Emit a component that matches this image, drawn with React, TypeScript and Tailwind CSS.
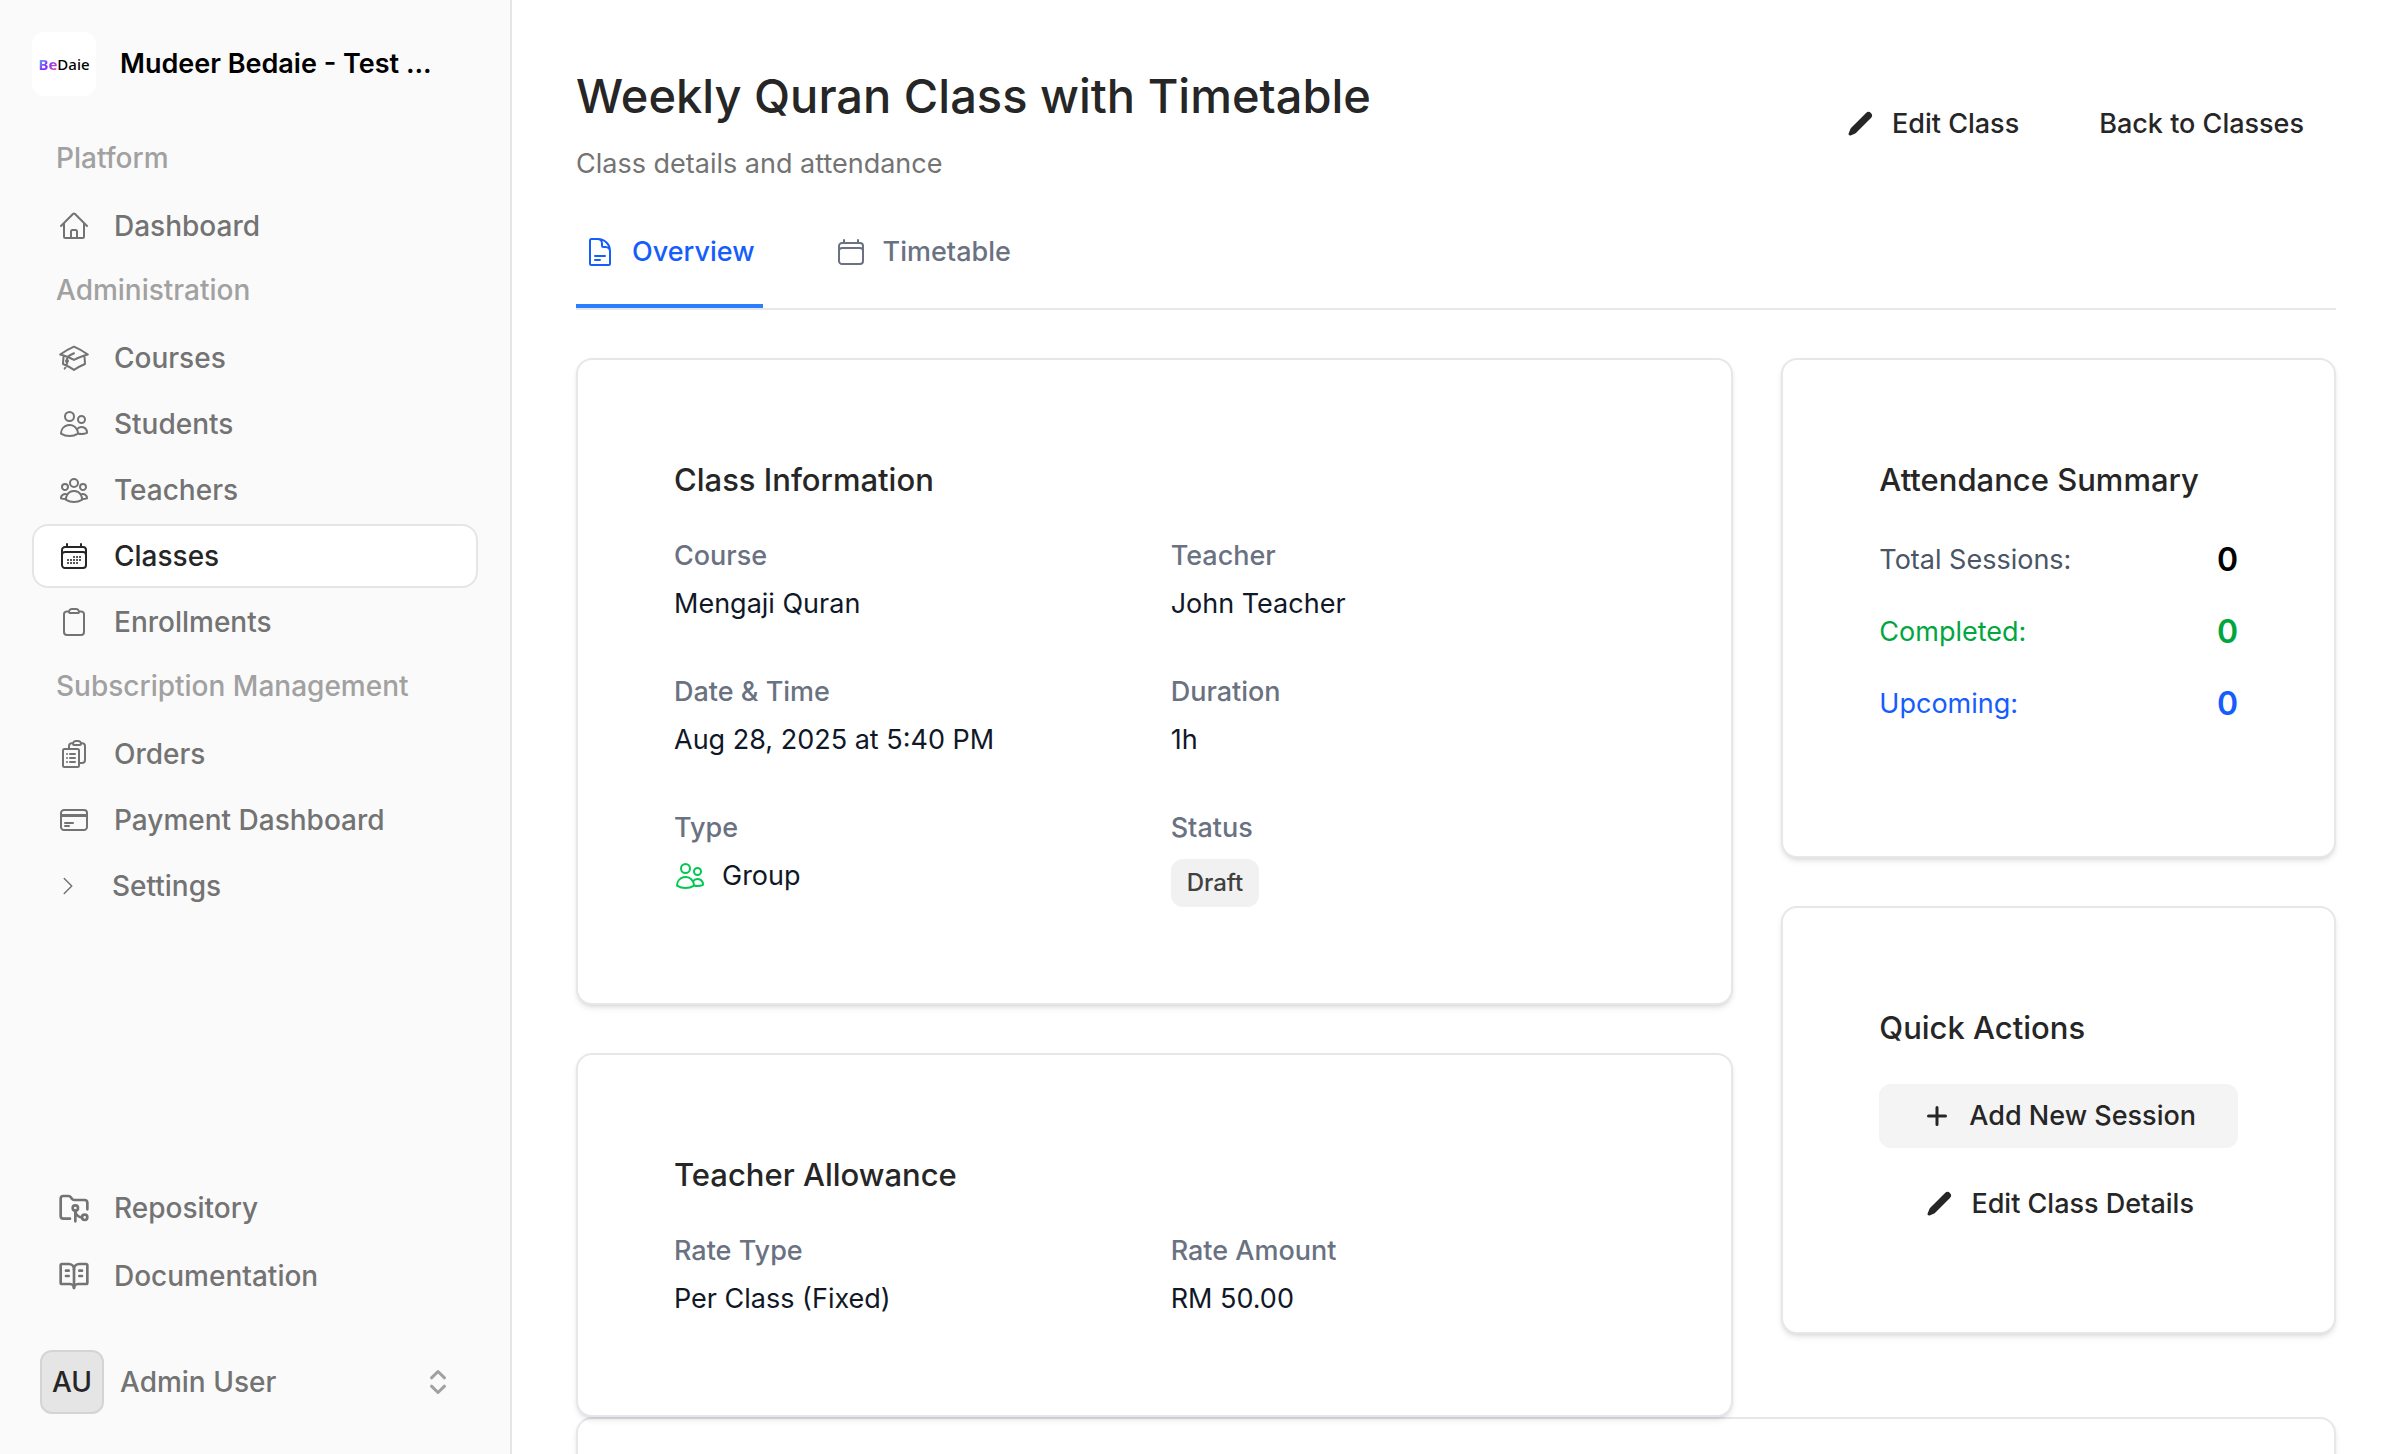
import type { ReactNode } from "react";
import type { IconType } from "react-icons";
import {
  HiOutlineAcademicCap,
  HiOutlineCalendar,
  HiOutlineCalendarDays,
  HiOutlineChevronRight,
  HiOutlineClipboard,
  HiOutlineClipboardDocumentList,
  HiOutlineCreditCard,
  HiOutlineDocumentText,
  HiOutlineHome,
  HiOutlineUserGroup,
  HiOutlineUsers,
} from "react-icons/hi2";
import { BookOpenText, FolderGit2 } from "lucide-react";

function MicroIcon({ d }: { d: string }) {
  return (
    <svg viewBox="0 0 16 16" fill="currentColor" aria-hidden="true" className="size-8 shrink-0">
      <path fillRule="evenodd" clipRule="evenodd" d={d} />
    </svg>
  );
}

const pencil =
  "M11.013 2.513a1.75 1.75 0 0 1 2.475 2.474L6.226 12.25a2.751 2.751 0 0 1-.892.596l-2.047.848a.75.75 0 0 1-.98-.98l.848-2.047a2.75 2.75 0 0 1 .596-.892l7.262-7.261Z";
const plus =
  "M8.75 3.75a.75.75 0 0 0-1.5 0v3.5h-3.5a.75.75 0 0 0 0 1.5h3.5v3.5a.75.75 0 0 0 1.5 0v-3.5h3.5a.75.75 0 0 0 0-1.5h-3.5v-3.5Z";

function ChevronUpDown() {
  return (
    <svg
      viewBox="0 0 16 16"
      fill="none"
      stroke="currentColor"
      strokeWidth="1.5"
      strokeLinecap="round"
      strokeLinejoin="round"
      aria-hidden="true"
      className="mr-4 ml-auto size-8 shrink-0 text-neutral-400"
    >
      <path d="M4.75 5.9 8 2.75l3.25 3.15M4.75 10.1 8 13.25l3.25-3.15" />
    </svg>
  );
}

type Item = { label: string; icon: IconType | typeof FolderGit2; active?: boolean };

function NavItem({ label, icon: Icon, active }: Item) {
  return (
    <a
      href="#"
      aria-current={active ? "page" : undefined}
      className={`flex h-16 items-center gap-6 rounded-2xl border-2 px-6 ${
        active ? "border-neutral-200 bg-white text-neutral-800" : "border-transparent text-neutral-500"
      }`}
    >
      <Icon className="size-8 shrink-0" />
      {label}
    </a>
  );
}

function NavGroup({ title, items, children }: { title: string; items: Item[]; children?: ReactNode }) {
  return (
    <section>
      <h2 className="mb-1 flex h-16 items-center px-6 text-neutral-400">{title}</h2>
      <div className="flex flex-col gap-0.5">
        {items.map((i) => (
          <NavItem key={i.label} {...i} />
        ))}
        {children}
      </div>
    </section>
  );
}

function Sidebar() {
  return (
    <aside className="flex w-[512px] shrink-0 flex-col border-r-2 border-neutral-200 bg-neutral-50 p-8 text-[28px] font-medium">
      <a href="#" className="flex items-center gap-6 text-black">
        <span className="flex size-16 shrink-0 items-center justify-center rounded-xl bg-white font-['Noto_Sans',sans-serif] text-[15px] leading-5 font-medium">
          <span className="bg-linear-to-br from-cyan-400 via-violet-600 to-pink-500 bg-clip-text font-bold text-transparent">
            Be
          </span>
          Daie
        </span>
        <span className="text-[27px] font-semibold whitespace-nowrap">Mudeer Bedaie - Test ...</span>
      </a>
      <nav className="mt-[30px]">
        <NavGroup title="Platform" items={[{ label: "Dashboard", icon: HiOutlineHome }]} />
        <NavGroup
          title="Administration"
          items={[
            { label: "Courses", icon: HiOutlineAcademicCap },
            { label: "Students", icon: HiOutlineUsers },
            { label: "Teachers", icon: HiOutlineUserGroup },
            { label: "Classes", icon: HiOutlineCalendarDays, active: true },
            { label: "Enrollments", icon: HiOutlineClipboard },
          ]}
        />
        <NavGroup
          title="Subscription Management"
          items={[
            { label: "Orders", icon: HiOutlineClipboardDocumentList },
            { label: "Payment Dashboard", icon: HiOutlineCreditCard },
          ]}
        >
          <button type="button" className="flex h-16 items-center gap-8 px-6 text-neutral-500">
            <HiOutlineChevronRight className="size-6 shrink-0" />
            Settings
          </button>
        </NavGroup>
      </nav>
      <nav className="mt-auto flex flex-col gap-1">
        <NavItem label="Repository" icon={FolderGit2} />
        <NavItem label="Documentation" icon={BookOpenText} />
      </nav>
      <button type="button" className="mt-[34px] flex items-center p-2 text-neutral-500">
        <span className="flex size-16 shrink-0 items-center justify-center rounded-xl border-2 border-neutral-300 bg-neutral-200 text-neutral-800">
          AU
        </span>
        <span className="ml-4">Admin User</span>
        <ChevronUpDown />
      </button>
    </aside>
  );
}

function Card({ title, children }: { title: string; children: ReactNode }) {
  return (
    <section className="rounded-2xl border-2 border-gray-200 bg-white p-24 shadow-md">
      <h2 className="mb-8 text-[31px] leading-12 font-medium whitespace-nowrap text-neutral-800">{title}</h2>
      {children}
    </section>
  );
}

function Field({ label, children }: { label: string; children: ReactNode }) {
  return (
    <div>
      <dt className="font-medium text-gray-500">{label}</dt>
      <dd className="mt-2 text-gray-900">{children}</dd>
    </div>
  );
}

function Stat({ label, value, tone, valueTone }: { label: string; value: number; tone: string; valueTone: string }) {
  return (
    <div className="flex h-12 items-center justify-between">
      <dt className={tone}>{label}</dt>
      <dd className={`text-[32px] font-semibold ${valueTone}`}>{value}</dd>
    </div>
  );
}

export default function App() {
  return (
    <div className="flex h-screen bg-white font-['Inter',sans-serif] text-[27px] leading-10">
      <Sidebar />
      <main className="min-w-0 flex-1 overflow-y-auto p-16 [scrollbar-width:none]">
        <header className="flex items-center justify-between">
          <div>
            <h1 className="text-[47px] leading-16 font-medium text-neutral-800">Weekly Quran Class with Timetable</h1>
            <p className="mt-4 text-neutral-500">Class details and attendance</p>
          </div>
          <div className="flex gap-4 font-medium text-neutral-800">
            <a href="#" className="flex h-20 items-center gap-4 px-8">
              <MicroIcon d={pencil} />
              Edit Class
            </a>
            <a href="#" className="flex h-20 items-center px-8">
              Back to Classes
            </a>
          </div>
        </header>

        <div role="tablist" className="mt-4 flex gap-16 border-b-2 border-gray-200 font-medium">
          <button
            type="button"
            role="tab"
            aria-selected="true"
            className="flex items-center gap-4 border-b-4 border-blue-500 px-2 py-8 text-blue-600"
          >
            <HiOutlineDocumentText className="size-8" />
            Overview
          </button>
          <button
            type="button"
            role="tab"
            aria-selected="false"
            className="flex items-center gap-4 border-b-4 border-transparent px-2 py-8 text-gray-500"
          >
            <HiOutlineCalendar className="size-8" />
            Timetable
          </button>
        </div>

        <div className="mt-12 grid grid-cols-3 items-start gap-12">
          <div className="col-span-2 flex flex-col gap-12">
            <Card title="Class Information">
              <dl className="grid grid-cols-2 gap-x-8 gap-y-12">
                <Field label="Course">Mengaji Quran</Field>
                <Field label="Teacher">John Teacher</Field>
                <Field label="Date & Time">Aug 28, 2025 at 5:40 PM</Field>
                <Field label="Duration">1h</Field>
                <Field label="Type">
                  <span className="flex items-center gap-4">
                    <HiOutlineUsers className="size-8 text-green-500" />
                    Group
                  </span>
                </Field>
                <Field label="Status">
                  <span className="flex pt-[3px]">
                    <span className="flex h-12 items-center rounded-xl bg-[#f1f1f1] px-4 text-[24px] font-medium text-neutral-700">
                      Draft
                    </span>
                  </span>
                </Field>
              </dl>
            </Card>
            <Card title="Teacher Allowance">
              <dl className="grid grid-cols-2 gap-x-8">
                <Field label="Rate Type">Per Class (Fixed)</Field>
                <Field label="Rate Amount">RM 50.00</Field>
              </dl>
            </Card>
          </div>
          <div className="flex flex-col gap-12">
            <Card title="Attendance Summary">
              <dl className="mb-8 flex flex-col gap-6">
                <Stat label="Total Sessions:" value={0} tone="text-gray-600" valueTone="text-black" />
                <Stat label="Completed:" value={0} tone="text-green-600" valueTone="text-green-600" />
                <Stat label="Upcoming:" value={0} tone="text-blue-600" valueTone="text-blue-600" />
              </dl>
            </Card>
            <Card title="Quick Actions">
              <div className="flex flex-col gap-6 font-medium text-neutral-800">
                <button type="button" className="flex h-16 items-center justify-center gap-4 rounded-xl bg-[#f4f4f4]">
                  <MicroIcon d={plus} />
                  Add New Session
                </button>
                <button type="button" className="flex h-16 items-center justify-center gap-4 rounded-xl">
                  <MicroIcon d={pencil} />
                  Edit Class Details
                </button>
              </div>
            </Card>
          </div>
        </div>
        <section className="h-64 rounded-2xl border-2 border-gray-200 bg-white shadow-md" />
      </main>
    </div>
  );
}
